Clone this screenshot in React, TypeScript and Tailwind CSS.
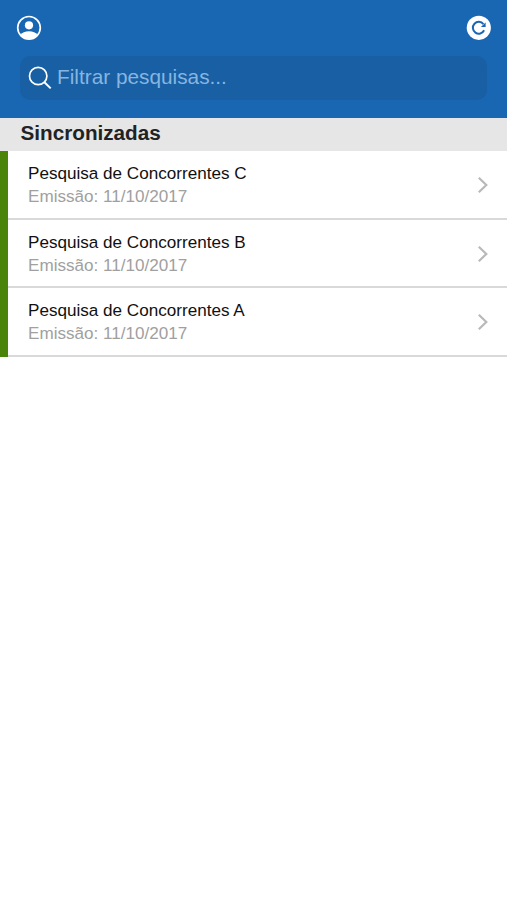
import React, { useState } from "react";

type Survey = {
  id: number;
  title: string;
  issuedAt: string;
};

const surveys: Survey[] = [
  { id: 3, title: "Pesquisa de Concorrentes C", issuedAt: "11/10/2017" },
  { id: 2, title: "Pesquisa de Concorrentes B", issuedAt: "11/10/2017" },
  { id: 1, title: "Pesquisa de Concorrentes A", issuedAt: "11/10/2017" },
];

function ProfileIcon() {
  return (
    <svg width="26" height="26" viewBox="0 0 26 26" fill="none">
      <circle cx="13" cy="12.8" r="11.3" stroke="#fff" strokeWidth="1.7" />
      <circle cx="13" cy="10.3" r="4.1" fill="#fff" />
      <path d="M4.6 20C6.2 17.4 9 16.2 13 16.2s6.8 1.2 8.4 3.8A11.3 11.3 0 0 1 13 24.2 11.3 11.3 0 0 1 4.6 20Z" fill="#fff" />
    </svg>
  );
}

function RefreshIcon() {
  return (
    <svg width="26" height="26" viewBox="0 0 26 26" fill="none">
      <circle cx="12.8" cy="12.8" r="12.1" fill="#fff" />
      <path d="M18.1 15.3A5.9 5.9 0 1 1 17.4 9.1" stroke="#1966b3" strokeWidth="2" />
      <path d="M19.6 7.4v4.7h-4.7Z" fill="#1966b3" />
    </svg>
  );
}

function SearchIcon() {
  return (
    <svg width="24" height="24" viewBox="0 0 24 24" fill="none" stroke="#fff">
      <circle cx="10.2" cy="10" r="8.7" strokeWidth="1.7" />
      <path d="M16.4 16.2l6.3 6.2" strokeWidth="2" />
    </svg>
  );
}

function ChevronIcon() {
  return (
    <svg width="12" height="18" viewBox="0 0 12 18" fill="none">
      <path d="M1.8 1.8L9.3 9l-7.5 7.2" stroke="#b9b9b9" strokeWidth="2.2" />
    </svg>
  );
}

export default function App() {
  const [filter, setFilter] = useState("");

  const visible = surveys.filter((s) =>
    s.title.toLowerCase().includes(filter.toLowerCase())
  );

  return (
    <div className="min-h-screen bg-white font-['Liberation_Sans',Arial,sans-serif]">
      {/* top bar */}
      <header className="h-[118px] bg-[#1966b3] pt-[15px]">
        <div className="flex justify-between pl-4 pr-[15px]">
          <button aria-label="Perfil">
            <ProfileIcon />
          </button>
          <button aria-label="Sincronizar">
            <RefreshIcon />
          </button>
        </div>

        <label className="mx-5 mt-[15px] flex h-11 items-center rounded-[10px] bg-[#1860a3] pl-2">
          <SearchIcon />
          <input
            value={filter}
            onChange={(e) => setFilter(e.target.value)}
            placeholder="Filtrar pesquisas..."
            className="ml-[5px] h-full min-w-0 flex-1 bg-transparent pb-0.5 text-[20.8px] text-white outline-none placeholder:text-[#87b5e1]"
          />
        </label>
      </header>

      <h2 className="h-[33px] bg-[#e6e6e6] pl-[20.5px] text-[20.7px] leading-[30px] font-bold text-[#222]">
        Sincronizadas
      </h2>

      {/* survey list */}
      <ul className="border-l-8 border-[#4a8408]">
        {visible.map((s) => (
          <li
            key={s.id}
            className="flex h-[68.5px] items-center justify-between border-b-2 border-[#d9d9d9] pt-[2px] pr-[18px] pl-5"
          >
            <div className="text-[17.1px] leading-[23px]">
              <p className="text-[#111]">{s.title}</p>
              <p className="text-[#a0a0a0]">Emissão: {s.issuedAt}</p>
            </div>
            <ChevronIcon />
          </li>
        ))}
      </ul>
    </div>
  );
}
